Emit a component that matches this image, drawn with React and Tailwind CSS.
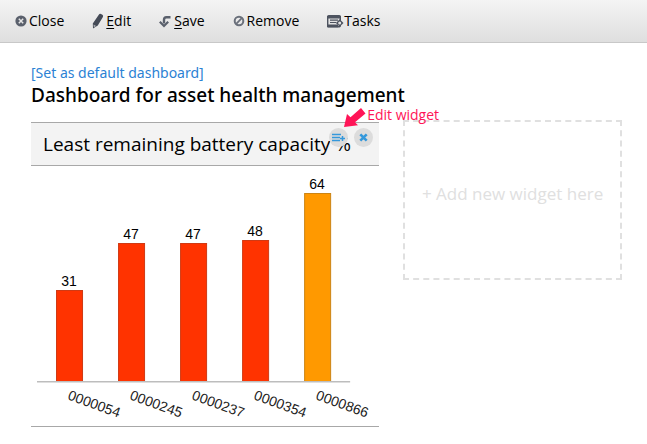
import React from 'react';

const readings = [
  { id: '0000054', value: 31, fill: '#ff3300', stroke: '#d03a14' },
  { id: '0000245', value: 47, fill: '#ff3300', stroke: '#d03a14' },
  { id: '0000237', value: 47, fill: '#ff3300', stroke: '#d03a14' },
  { id: '0000354', value: 48, fill: '#ff3300', stroke: '#d03a14' },
  { id: '0000866', value: 64, fill: '#ff9900', stroke: '#cc8414' },
];

const CloseIcon = () => (
  <svg width="12" height="12" viewBox="0 0 12 12" aria-hidden="true">
    <circle cx="6" cy="6" r="5.6" fill="#5a606c" />
    <path d="M3.8 3.8l4.4 4.4M8.2 3.8L3.8 8.2" stroke="#e6e6e6" strokeWidth="1.5" />
  </svg>
);

const PencilIcon = () => (
  <svg width="12" height="16" viewBox="0 0 12 16" aria-hidden="true">
    <path d="M6.8 1.8q.8-1.400 2.200-.8l1.400.8q1.200.9.5 2.200L5.800 12.400 1 15.400.8 10.500z" fill="#454b57" />
    <path d="M1.500 11.600l2.600 1.300-2.200 1.300z" fill="#b0b3b8" />
  </svg>
);

const SaveIcon = () => (
  <svg width="13" height="13" viewBox="0 0 13 13" aria-hidden="true">
    <path d="M11.500 2.200H7.500Q5 2.200 5 4.800V8.500" fill="none" stroke="#5a606c" strokeWidth="2.400" />
    <path d="M.8 6.800L5 11 9.200 6.800" fill="none" stroke="#5a606c" strokeWidth="2.200" />
  </svg>
);

const RemoveIcon = () => (
  <svg width="12" height="12" viewBox="0 0 12 12" aria-hidden="true">
    <circle cx="6" cy="6" r="4.300" fill="none" stroke="#6a707b" strokeWidth="2" />
    <path d="M3.200 8.800l5.600-5.600" stroke="#6a707b" strokeWidth="1.800" />
  </svg>
);

const TasksIcon = () => (
  <svg width="17" height="13" viewBox="0 0 17 13" aria-hidden="true">
    <rect x=".7" y=".7" width="12.600" height="11" rx="1" fill="#e2e2e2" stroke="#4d535f" strokeWidth="1.400" />
    <path d="M0 1h14v2.400H0zM0 9.400h11v2.800H0z" fill="#4d535f" />
    <path d="M3 5.200h8M3 7.500h6" stroke="#4d535f" strokeWidth="1.200" />
    <path d="M12.700 4.200L16.500 8l-3.800 3.800L8.900 8z" fill="#4d535f" />
    <circle cx="12.700" cy="8" r="1.500" fill="#e2e2e2" />
  </svg>
);

const BatteryChart = () => (
  <svg viewBox="0 0 348 260" className="block w-full" role="img" aria-label="Least remaining battery capacity %">
    <path d="M6 215.500h313" stroke="#bdbdbd" />
    <path d="M6 216.500h313" stroke="#dedede" />
    {readings.map((reading, i) => {
      const x = 25 + Math.round(i * 62.1);
      const height = Math.round(reading.value * 2.93);
      const top = 215 - height;
      return (
        <g key={reading.id} fontFamily="'Liberation Sans', Arial, sans-serif" fontSize="14">
          <path
            d={`M${x + 0.5} 215V${top + 0.5}h26V215`}
            fill={reading.fill}
            stroke={reading.stroke}
          />
          <text x={x + 13} y={top - 4} textAnchor="middle" fill="#000">{reading.value}</text>
          <text transform={`translate(${x + 11} 233) rotate(20)`} fill="#222">{reading.id}</text>
        </g>
      );
    })}
  </svg>
);

const ToolbarButton = ({ icon, children, className }) => (
  <button type="button" className={`flex items-center text-sm leading-5 text-black ${className}`}>
    {icon}
    {children}
  </button>
);

export default function App() {
  return (
    <div className="min-h-screen bg-white font-['Open_Sans','Noto_Sans',sans-serif] text-black">
      <header className="flex h-[43px] items-center gap-7 border-b border-[#c8c8c8] bg-linear-to-b from-[#f4f4f4] to-[#dfdfdf] pl-[15px]">
        <ToolbarButton icon={<CloseIcon />} className="gap-0.5">Close</ToolbarButton>
        <ToolbarButton icon={<PencilIcon />} className="gap-0.5">
          <span><u className="underline-offset-2">E</u>dit</span>
        </ToolbarButton>
        <ToolbarButton icon={<SaveIcon />} className="gap-0.5">
          <span><u className="underline-offset-2">S</u>ave</span>
        </ToolbarButton>
        <ToolbarButton icon={<RemoveIcon />} className="gap-0.5">Remove</ToolbarButton>
        <ToolbarButton icon={<TasksIcon />}>Tasks</ToolbarButton>
      </header>

      <main className="px-[25px] pt-5 pl-[31px]">
        <a href="#default" className="block w-fit font-['Noto_Sans','Open_Sans',sans-serif] text-sm leading-5 text-[#2c82d4]">[Set as default dashboard]</a>
        <h1 className="font-['Noto_Sans','Open_Sans',sans-serif] text-[19px] leading-6 font-medium">Dashboard for asset health management</h1>

        <div className="mt-[13px] grid grid-cols-[35fr_22fr] items-start gap-6">
          <section className="mt-0.5 border-y border-[#a8a8a8]">
            <div className="relative border-b border-[#a8a8a8] bg-[#f3f3f3] px-3 py-1.5">
              <h2 className="text-[19px] leading-[30px] whitespace-nowrap">Least remaining battery capacity %</h2>
              <div className="absolute top-[5px] right-1.5 flex gap-1.5">
                <button type="button" aria-label="Edit widget" className="flex size-[19px] items-center justify-center rounded-full bg-[#dcdcdc]">
                  <svg width="13" height="9" viewBox="0 0 13 9" aria-hidden="true">
                    <path d="M0 1.500h9M0 4.500h8M0 7.500h8" stroke="#3498db" strokeWidth="1.300" />
                    <path d="M10.500 3v5M8 5.500h5" stroke="#3498db" strokeWidth="1.500" />
                  </svg>
                </button>
                <button type="button" aria-label="Close widget" className="flex size-[19px] items-center justify-center rounded-full bg-[#dcdcdc]">
                  <svg width="9" height="9" viewBox="0 0 9 9" aria-hidden="true">
                    <path d="M1.300 1.300l6.400 6.400M7.700 1.300L1.300 7.700" stroke="#3498db" strokeWidth="2.600" />
                  </svg>
                </button>
              </div>
              {/* callout pointing at the edit button */}
              <div className="absolute -top-[18px] left-[calc(100%-36px)] flex items-start text-sm leading-5 whitespace-nowrap text-[#ff1457]">
                <svg width="24" height="20" viewBox="0 0 24 20" className="mt-[3px]" aria-hidden="true">
                  <path d="M1 19L4 6l3.500 3.200L18 0l4.500 5.500-10.500 8.700 3 3z" fill="#ff1457" />
                </svg>
                Edit widget
              </div>
            </div>
            <BatteryChart />
          </section>

          <button type="button" className="flex h-40 items-center justify-center border-2 border-dashed border-[#e0e0e0] pb-3 text-[17px] leading-6 text-[#e0e0e0]">
            + Add new widget here
          </button>
        </div>
      </main>
    </div>
  );
}
